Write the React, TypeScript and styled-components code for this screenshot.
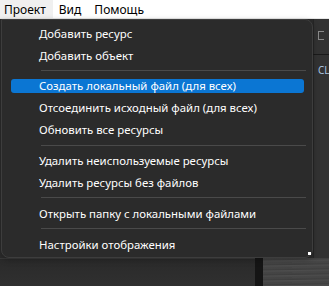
import React from "react";
import styled, { createGlobalStyle } from "styled-components";

const Global = createGlobalStyle`
  html, body { margin: 0; padding: 0; background: #2c2c2c; overflow: hidden; }
  * { box-sizing: border-box; }
`;

const Page = styled.div`
  width: 329px;
  height: 286px;
  display: flex;
  flex-direction: column;
  font-family: "Noto Sans", "Open Sans", sans-serif;
  position: relative;
  overflow: hidden;
`;

const MenuBar = styled.div`
  height: 19px;
  background: #ffffff;
  border-bottom: 1px solid #e6e6e6;
  display: flex;
  align-items: stretch;
  margin-left: -2px;
`;

const MenuBarItem = styled.div<{ $active?: boolean }>`
  padding: 0 7px 0 6px;
  display: flex;
  align-items: center;
  font-size: 12px;
  color: #000;
  background: ${(p) => (p.$active ? "#f0f0f0" : "transparent")};
  height: 18px;
`;

const Workspace = styled.div`
  flex: 1;
  display: flex;
  flex-direction: column;
  position: relative;
`;

const Upper = styled.div`
  height: 239px;
  display: flex;
`;

const MainArea = styled.div`
  flex: 1;
  background: #2b2b2b;
`;

const SidePanel = styled.div`
  width: 16px;
  background: #323232;
  border-left: 1px solid #262626;
  display: flex;
  flex-direction: column;
  padding-left: 4px;
`;

const SideIcon = styled.div`
  margin-top: 12px;
  width: 6px;
  height: 9px;
  border: 1px solid #8a8a8a;
  border-right: none;
`;

const SideRule = styled.div`
  margin-top: 14px;
  margin-left: -5px;
  height: 1px;
  background: #1a1a1a;
`;

const SideLabel = styled.div`
  margin-top: 9px;
  font-size: 10px;
  color: #a9c2e0;
  white-space: nowrap;
  line-height: 12px;
`;

const Lower = styled.div`
  flex: 1;
  display: flex;
`;

const LowerDark = styled.div`
  width: 255px;
  background: linear-gradient(#2a2a2a, #303030);
  border-top: 1px solid #3a3a3a;
`;

const LowerStrip = styled.div`
  width: 8px;
  background: #151515;
`;

const Texture = styled.div`
  flex: 1;
  background:
    repeating-linear-gradient(
      179deg,
      #474747 0px,
      #3e3e3e 2px,
      #4d4d4d 3px,
      #434343 5px
    );
`;

const Dropdown = styled.div`
  position: absolute;
  left: 1px;
  top: 0;
  width: 312px;
  height: 239px;
  background: #2b2b2b;
  border: 1px solid #3d3d3d;
  border-radius: 0 8px 8px 8px;
  padding: 2px 0;
  display: flex;
  flex-direction: column;
  box-shadow: 0 2px 6px rgba(0, 0, 0, 0.25);
`;

const Item = styled.div<{ $active?: boolean }>`
  height: 22px;
  display: flex;
  align-items: center;
  padding: 4px 8px 4px 9px;
  & > span {
    flex: 1;
    height: 14px;
    display: flex;
    align-items: center;
    padding-left: 28px;
    font-size: 11.4px;
    color: #ffffff;
    white-space: nowrap;
    border-radius: 3px;
    background: ${(p) => (p.$active ? "#0b76d3" : "transparent")};
  }
`;

const Separator = styled.div`
  height: 9px;
  display: flex;
  align-items: center;
  padding: 0 6px 0 39px;
  &::after {
    content: "";
    flex: 1;
    height: 1px;
    background: #4a4a4a;
  }
`;

const Grip = styled.div`
  position: absolute;
  right: 1px;
  bottom: 2px;
  width: 3px;
  height: 3px;
  background: #ffffff;
`;

type Entry = { label: string; active?: boolean } | "sep";

const entries: Entry[] = [
  { label: "Добавить ресурс" },
  { label: "Добавить объект" },
  "sep",
  { label: "Создать локальный файл (для всех)", active: true },
  { label: "Отсоединить исходный файл (для всех)" },
  { label: "Обновить все ресурсы" },
  "sep",
  { label: "Удалить неиспользуемые ресурсы" },
  { label: "Удалить ресурсы без файлов" },
  "sep",
  { label: "Открыть папку с локальными файлами" },
  "sep",
  { label: "Настройки отображения" },
];

export default function App() {
  return (
    <Page>
      <Global />
      <MenuBar>
        <MenuBarItem $active>Проект</MenuBarItem>
        <MenuBarItem>Вид</MenuBarItem>
        <MenuBarItem>Помощь</MenuBarItem>
      </MenuBar>
      <Workspace>
        <Upper>
          <MainArea />
          <SidePanel>
            <SideIcon />
            <SideRule />
            <SideLabel>CL</SideLabel>
          </SidePanel>
        </Upper>
        <Lower>
          <LowerDark />
          <LowerStrip />
          <Texture />
        </Lower>
        <Dropdown>
          {entries.map((e, i) =>
            e === "sep" ? (
              <Separator key={i} />
            ) : (
              <Item key={i} $active={e.active}>
                <span>{e.label}</span>
              </Item>
            )
          )}
          <Grip />
        </Dropdown>
      </Workspace>
    </Page>
  );
}
